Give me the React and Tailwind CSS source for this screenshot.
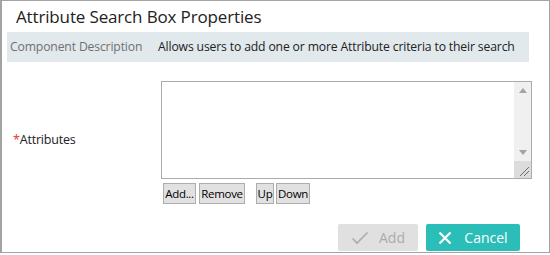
// Attribute Search Box Properties dialog

function CheckIcon() {
  return (
    <svg width="18" height="14" viewBox="0 0 18 14" fill="none" stroke="currentColor" strokeWidth={1.6}>
      <path d="M1.5 7.5l4.5 4.5L16.5 1.5" />
    </svg>
  );
}

function XIcon() {
  return (
    <svg width="14" height="14" viewBox="0 0 14 14" fill="none" stroke="currentColor" strokeWidth={2.2}>
      <path d="M1.5 1.5l11 11M12.5 1.5l-11 11" />
    </svg>
  );
}

function SmallButton({ children, className = "" }) {
  return (
    <button
      className={
        "h-[21px] border border-[#adadad] bg-[#e1e1e1] text-[11.5px] tracking-[-0.3px] leading-none text-black flex items-center justify-center " +
        className
      }
    >
      {children}
    </button>
  );
}

export default function App() {
  return (
    <div
      className="w-[550px] h-[253px] border border-l-2 border-[#a3a3a3] bg-white flex flex-col"
      style={{ fontFamily: '"Open Sans", "Noto Sans", sans-serif' }}
    >
      {/* Title */}
      <div className="h-[31px] pl-[14px] flex items-center text-[17px] text-[#222] tracking-[-0.15px]">
        Attribute Search Box Properties
      </div>

      {/* Description band */}
      <div className="ml-[5px] w-[522px] h-[30px] bg-[#e1e9ec] flex items-center pl-[3px] text-[12.2px] tracking-[-0.15px]">
        <span className="text-[#707070] w-[148px]">Component Description</span>
        <span className="text-[#222]">Allows users to add one or more Attribute criteria to their search</span>
      </div>

      {/* Attributes row */}
      <div className="flex mt-[19px]">
        <div className="w-[159px] pl-[11px] pt-[50px] text-[12.5px] text-[#222] tracking-[-0.2px]">
          <span className="text-[#e0392b]">*</span>Attributes
        </div>
        <div className="flex flex-col">
          <div className="w-[371px] h-[98px] border border-[#ababab] flex">
            <div className="flex-1" />
            <div className="w-[17px] flex flex-col">
              <div className="flex-1 bg-[#f0f0f0] flex flex-col items-center justify-between py-[6px]">
                <svg width="8" height="5" viewBox="0 0 8 5">
                  <path d="M0 5L4 0l4 5z" fill="#a3a3a3" />
                </svg>
                <svg width="8" height="5" viewBox="0 0 8 5">
                  <path d="M0 0h8L4 5z" fill="#a3a3a3" />
                </svg>
              </div>
              <div className="h-[17px] bg-[#dcdcdc] flex items-end justify-end p-[2px]">
                <svg width="10" height="10" viewBox="0 0 10 10" stroke="#6e6e6e" strokeWidth={1}>
                  <path d="M1 10L10 1M5 10L10 5" />
                </svg>
              </div>
            </div>
          </div>
          <div className="flex mt-[4px] ml-[2px]">
            <SmallButton className="w-[33px]">Add...</SmallButton>
            <SmallButton className="w-[46px] ml-[3px]">Remove</SmallButton>
            <SmallButton className="w-[18px] ml-[11px]">Up</SmallButton>
            <SmallButton className="w-[34px] ml-[2px]">Down</SmallButton>
          </div>
        </div>
      </div>

      {/* Footer actions */}
      <div className="flex justify-end gap-[8px] pr-[29px] mt-[20px]">
        <button className="w-[80px] h-[27px] rounded-[2px] bg-[#e0e0e0] text-[#ababab] text-[14px] flex items-center justify-center gap-[10px]">
          <CheckIcon />
          <span>Add</span>
        </button>
        <button className="w-[94px] h-[27px] rounded-[2px] bg-[#2bbdb7] text-white text-[14px] flex items-center justify-center gap-[12px]">
          <XIcon />
          <span>Cancel</span>
        </button>
      </div>
    </div>
  );
}
